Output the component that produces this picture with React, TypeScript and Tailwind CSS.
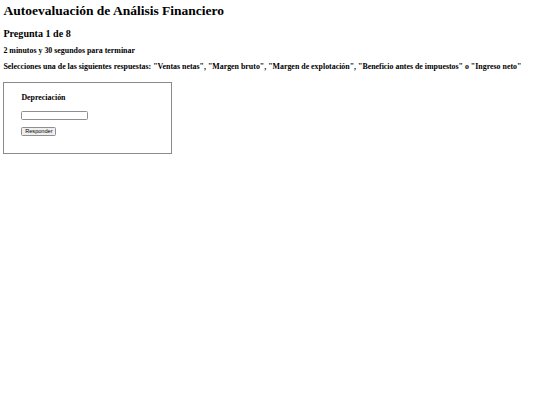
export default function App() {
    // Page is a scaled-down copy of a plain HTML quiz page.
    return (
        <div className="min-h-[405px] bg-white px-[3.4px] pt-[3.4px] text-black font-['Liberation_Serif',serif]">
            <h1 className="text-[13.5px] leading-[15px] font-bold">Autoevaluación de Análisis Financiero</h1>
            <h2 className="mt-[9.2px] text-[10.1px] leading-[11px] font-bold">Pregunta 1 de 8</h2>
            <h3 className="mt-[7.2px] text-[7.9px] leading-[9px] font-bold">2 minutos y 30 segundos para terminar</h3>
            <h3 className="mt-[7.3px] text-[7.9px] leading-[9px] font-bold whitespace-nowrap">
                Selecciones una de las siguientes respuestas: "Ventas netas", "Margen bruto", "Margen de explotación", "Beneficio antes de impuestos" o "Ingreso neto"
            </h3>

            <div className="mt-[10.9px] w-[168.5px] border border-[#8a8a8a] pl-[17px] pt-[10.5px] pb-[17px]">
                <h3 className="text-[7.9px] leading-[9px] font-bold">Depreciación</h3>
                <input
                    type="text"
                    className="mt-[8.5px] block h-[9px] w-[66.5px] rounded-[1.5px] border border-[#8f8f8f] bg-white"
                />
                <button
                    type="button"
                    className="mt-[7px] block h-[9px] w-[35px] rounded-[1.5px] border border-[#8f8f8f] bg-[#efefef] p-0 text-[5.6px] leading-none text-black font-['Liberation_Sans',sans-serif]"
                >
                    Responder
                </button>
            </div>
        </div>
    );
}
